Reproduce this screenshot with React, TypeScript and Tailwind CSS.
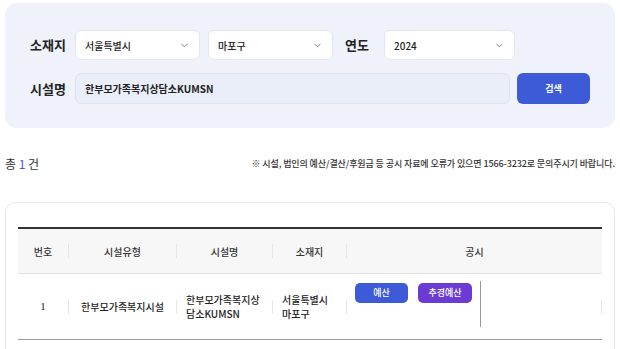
import React from "react";
import { FiChevronDown } from "react-icons/fi";

const font = { fontFamily: '"Noto Sans CJK KR", "Noto Sans", sans-serif' };

const Select: React.FC<{ value: string; w: string }> = ({ value, w }) => (
  <div className={`${w} h-[30px] bg-white rounded-md border border-[#e3e7ef] flex items-center justify-between px-[9px]`}>
    <span className="text-[10px] font-medium text-[#222]">{value}</span>
    <FiChevronDown size={"11px"} color="#777" />
  </div>
);

const Sep: React.FC = () => <div className="w-px h-[14px] bg-[#e6e6e6]" />;

const App: React.FC = () => {
  return (
    <div style={font} className="w-[620px] h-[349px] bg-white overflow-hidden pt-[3px] px-[5px]">
      {/* search panel */}
      <div className="h-[125px] bg-[#eff2fa] rounded-[12px] pl-[25px] pr-[25px] pt-[27px] flex flex-col gap-[13px]">
        <div className="flex items-center">
          <div className="w-[45px] text-[13px] font-bold text-[#222]">소재지</div>
          <Select value="서울특별시" w="w-[125px]" />
          <div className="w-[8px]" />
          <Select value="마포구" w="w-[125px]" />
          <div className="w-[51px] pl-[12px] text-[13px] font-bold text-[#222]">연도</div>
          <Select value="2024" w="w-[131px]" />
        </div>
        <div className="flex items-center">
          <div className="w-[45px] text-[13px] font-bold text-[#222]">시설명</div>
          <div className="w-[435px] h-[31px] bg-[#e9eef9] rounded-md border border-[#dde3ee] flex items-center px-[9px]">
            <span className="text-[10px] font-bold text-[#222]">한부모가족복지상담소KUMSN</span>
          </div>
          <div className="w-[7px]" />
          <button className="w-[73px] h-[31px] bg-[#3d5bd6] rounded-md text-white text-[9px] font-bold">검색</button>
        </div>
      </div>

      {/* summary */}
      <div className="flex items-center justify-between mt-[27px] h-[18px]">
        <div className="text-[12px] text-[#333]" style={{ fontFamily: '"Noto Sans CJK KR", serif' }}>
          총 <span className="text-[#3d5bd6]">1</span> 건
        </div>
        <div className="text-[9px] font-medium text-[#333] tracking-[-0.1px]">
          ※ 시설, 법인의 예산/결산/후원금 등 공시 자료에 오류가 있으면 1566-3232로 문의주시기 바랍니다.
        </div>
      </div>

      {/* table card */}
      <div className="mt-[29px] h-[200px] border border-[#e8e8e8] rounded-[10px] px-[12px] pt-[24px]">
        <div className="border-t-2 border-[#333]">
          <div className="flex h-[45px] bg-[#f7f7f7] border-b border-[#e2e2e2] text-[10px] font-medium text-[#333]">
            <div className="w-[50px] flex items-center justify-center">번호</div>
            <div className="flex items-center"><Sep /></div>
            <div className="w-[107px] flex items-center justify-center">시설유형</div>
            <div className="flex items-center"><Sep /></div>
            <div className="w-[95px] flex items-center justify-center">시설명</div>
            <div className="flex items-center"><Sep /></div>
            <div className="w-[73px] flex items-center justify-center">소재지</div>
            <div className="flex items-center"><Sep /></div>
            <div className="flex-1 flex items-center justify-center">공시</div>
          </div>
          <div className="flex h-[66px] border-b border-[#9a9a9a] text-[10px] font-medium text-[#222]">
            <div className="w-[50px] flex items-center justify-center text-[11px]" style={{ fontFamily: '"Liberation Serif", serif' }}>1</div>
            <div className="flex items-center"><Sep /></div>
            <div className="w-[107px] flex items-center justify-center">한부모가족복지시설</div>
            <div className="flex items-center"><Sep /></div>
            <div className="w-[95px] flex flex-col justify-center pl-[9px] leading-[14px]">
              <div>한부모가족복지상</div>
              <div>담소KUMSN</div>
            </div>
            <div className="flex items-center"><Sep /></div>
            <div className="w-[73px] flex flex-col justify-center pl-[9px] leading-[14px]">
              <div>서울특별시</div>
              <div>마포구</div>
            </div>
            <div className="flex items-center"><Sep /></div>
            <div className="flex-1 flex">
              <div className="w-[133px] pt-[9px] pl-[8px] flex gap-[10px] items-start">
                <button className="w-[53px] h-[20px] rounded-[5px] bg-[#3d5bd6] text-white text-[9px]">예산</button>
                <button className="w-[54px] h-[20px] rounded-[5px] bg-[#6b3bd4] text-white text-[9px]">추경예산</button>
              </div>
              <div className="w-px h-[46px] mt-[7px] bg-[#999]" />
              <div className="flex-1 flex items-center justify-end"><Sep /></div>
            </div>
          </div>
        </div>
      </div>
    </div>
  );
};

export default App;
